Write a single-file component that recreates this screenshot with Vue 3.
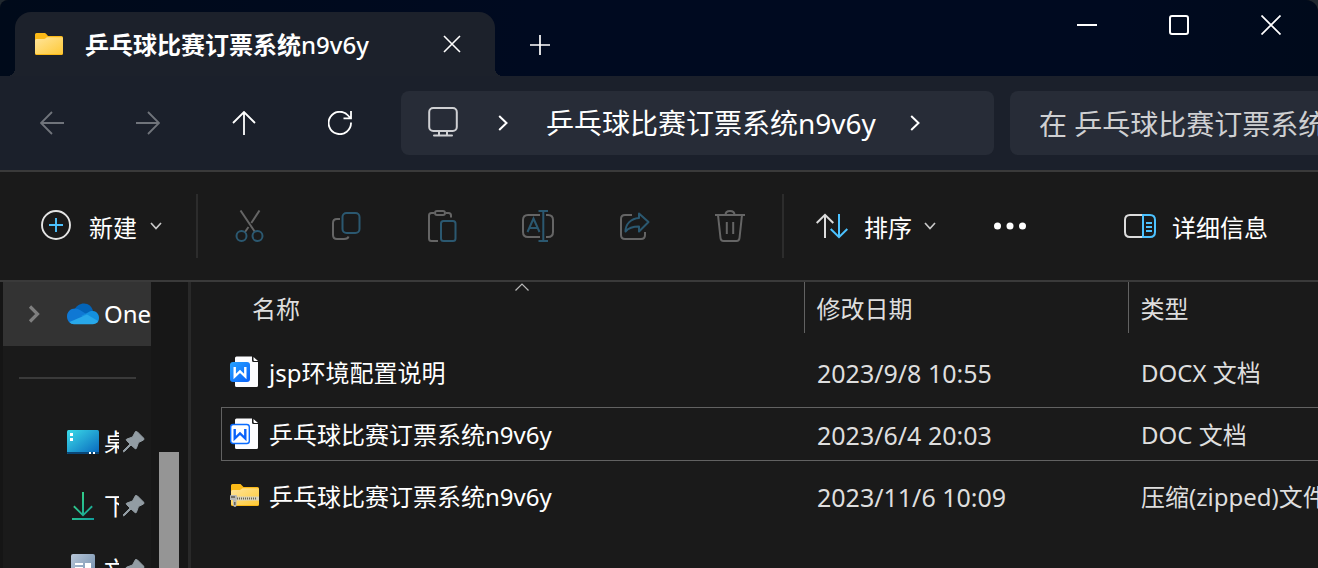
<script setup>
import { ref } from 'vue'

const folder = '乒乓球比赛订票系统'
const suffix = 'n9v6y'
const query = ref('')

const files = [
  { name: 'jsp环境配置说明', date: '2023/9/8 10:55', type: 'DOCX 文档', icon: 'docx', focused: false },
  { name: '乒乓球比赛订票系统n9v6y', date: '2023/6/4 20:03', type: 'DOC 文档', icon: 'doc', focused: true },
  { name: '乒乓球比赛订票系统n9v6y', date: '2023/11/6 10:09', type: '压缩(zipped)文件夹', icon: 'zip', focused: false }
]

const pinned = [
  { label: '桌面', icon: 'desktop' },
  { label: '下载', icon: 'download' },
  { label: '文档', icon: 'documents' }
]
</script>

<template>
  <div class="window">
    <header class="titlebar">
      <div class="tab">
        <svg class="tab-icon" width="28" height="22" viewBox="0 0 28 22">
          <defs>
            <linearGradient id="folderFront" x1="0" y1="0" x2="1" y2="1">
              <stop offset="0" stop-color="#ffe59b" />
              <stop offset="1" stop-color="#fec937" />
            </linearGradient>
          </defs>
          <path d="M0 1.500Q0 0 1.500 0H9.500Q10.500 0 11.300 1L13 3H26.500Q28 3 28 4.500V20.500Q28 22 26.500 22H1.500Q0 22 0 20.500Z" fill="#fbb917" />
          <path d="M0 7.500Q0 6 1.500 6H9Q10 6 11 5L12 4.200H26.500Q28 4.200 28 5.500V19.500Q28 21 26.500 21H1.500Q0 21 0 19.500Z" fill="url(#folderFront)" />
        </svg>
        <span class="tab-title">{{ folder }}<span class="latin">{{ suffix }}</span></span>
        <button class="tab-close" aria-label="关闭标签页">
          <svg width="18" height="18" viewBox="0 0 18 18"><path d="M1 1L17 17M17 1L1 17" stroke="#fff" stroke-width="1.6" /></svg>
        </button>
      </div>
      <button class="new-tab" aria-label="新标签页">
        <svg width="20" height="20" viewBox="0 0 20 20"><path d="M10 0V20M0 10H20" stroke="#fff" stroke-width="1.7" /></svg>
      </button>
      <div class="caption">
        <button aria-label="最小化"><svg width="20" height="20" viewBox="0 0 20 20"><path d="M0 10H20" stroke="#fff" stroke-width="2" /></svg></button>
        <button aria-label="最大化"><svg width="20" height="20" viewBox="0 0 20 20"><rect x="1" y="1" width="18" height="18" rx="2" fill="none" stroke="#fff" stroke-width="2" /></svg></button>
        <button aria-label="关闭"><svg width="20" height="20" viewBox="0 0 20 20"><path d="M.5 .5L19.500 19.500M19.500 .5L.5 19.500" stroke="#fff" stroke-width="1.7" /></svg></button>
      </div>
    </header>

    <nav class="navbar">
      <div class="nav-buttons">
        <button aria-label="后退" disabled>
          <svg width="24" height="24" viewBox="0 0 24 24"><path d="M24 12H1M12 1L1 12L12 23" /></svg>
        </button>
        <button aria-label="前进" disabled>
          <svg width="24" height="24" viewBox="0 0 24 24"><path d="M0 12H23M12 1L23 12L12 23" /></svg>
        </button>
        <button aria-label="向上">
          <svg width="24" height="24" viewBox="0 0 24 24"><path d="M12 24V1M1 12L12 1L23 12" /></svg>
        </button>
        <button aria-label="刷新">
          <svg width="24" height="24" viewBox="0 0 24 24"><path d="M23 11.500A11.200 11.200 0 1 1 20.600 5L22.500 7.300M23 0V7.400H15.500" /></svg>
        </button>
      </div>
      <div class="address">
        <svg class="monitor" width="32" height="32" viewBox="0 0 32 32" fill="none" stroke="#cfd0d3" stroke-width="2">
          <rect x="2.200" y="1" width="27.600" height="23" rx="4" />
          <path d="M12 24V28M20 24V28M7 28.500H25" stroke-linecap="round" />
        </svg>
        <svg class="crumb-chevron" width="10" height="16" viewBox="0 0 10 16"><path d="M1.200 1L8.500 8L1.200 15" /></svg>
        <button class="crumb">{{ folder }}{{ suffix }}</button>
        <svg class="crumb-chevron" width="10" height="16" viewBox="0 0 10 16"><path d="M1.200 1L8.500 8L1.200 15" /></svg>
      </div>
      <input v-model="query" class="search" type="text" aria-label="搜索" :placeholder="`在 ${folder}${suffix} 中搜索`" />
    </nav>

    <div class="commands">
      <button class="command create">
        <svg width="32" height="32" viewBox="0 0 32 32" fill="none">
          <circle cx="16" cy="15" r="14" stroke="#e4e4e4" stroke-width="1.900" />
          <path d="M16 8V22M9 15H23" stroke="#4cc2ff" stroke-width="1.900" />
        </svg>
        <span>新建</span>
        <svg class="drop" width="12" height="8" viewBox="0 0 12 8"><path d="M1 1L6 6.500L11 1" /></svg>
      </button>
      <span class="separator"></span>
      <div class="icon-group">
        <button aria-label="剪切" disabled>
          <svg width="32" height="32" viewBox="0 0 32 32">
            <path class="g" d="M6.500 .5L21 22M25.500 .5L17.300 13M14.500 17L11 22" />
            <circle class="b" cx="7.500" cy="26" r="5" /><circle class="b" cx="23.500" cy="26" r="5" />
          </svg>
        </button>
        <button aria-label="复制" disabled>
          <svg width="32" height="32" viewBox="0 0 32 32">
            <path class="g" d="M10 9H7Q3 9 3 13V25Q3 29 7 29H14Q18 29 18.500 26.500" />
            <rect class="b" x="12.500" y="3" width="17" height="20" rx="4" />
          </svg>
        </button>
        <button aria-label="粘贴" disabled>
          <svg width="32" height="32" viewBox="0 0 32 32">
            <path class="g" d="M8 3H5.500Q3 3 3 5.500V28.500Q3 31 5.500 31H12M20 3H22.500Q25 3 25 5.500V7.500" />
            <rect class="g" x="9" y="1" width="10" height="4" rx="2" />
            <rect class="b" x="15" y="11" width="14.500" height="20" rx="2.500" />
          </svg>
        </button>
        <button aria-label="重命名" disabled>
          <svg width="32" height="32" viewBox="0 0 32 32">
            <path class="g" d="M18 5H6Q1 5 1 10V22Q1 27 6 27H18M24 5H26Q31 5 31 10V22Q31 27 26 27H24" />
            <path class="b" d="M5.500 22L11.500 8.500L17.500 22M7.800 18H15.200M16.500 1H26M21.300 1V31M16.500 31H26" />
          </svg>
        </button>
        <button aria-label="共享" disabled>
          <svg width="32" height="32" viewBox="0 0 32 32">
            <path class="g" d="M14 5H7Q3 5 3 9V25Q3 29 7 29H23Q27 29 27 25V22" />
            <path class="b" d="M21 3.500L30.500 12L21 21.500V16.500C14 16.500 10 18.500 7.500 21.500C7.500 14 13 8.500 21 8Z" stroke-linejoin="round" />
          </svg>
        </button>
        <button aria-label="删除" disabled>
          <svg width="32" height="32" viewBox="0 0 32 32">
            <path class="g" d="M1 5H31M11.500 5Q11.500 1 16 1T20.500 5M4 5L6.500 28Q6.800 31 9.500 31H22.500Q25.200 31 25.500 28L28 5M12.800 12V24M19.200 12V24" />
          </svg>
        </button>
      </div>
      <span class="separator"></span>
      <button class="command sort">
        <svg width="32" height="32" viewBox="0 0 32 32" fill="none" stroke-width="2">
          <path d="M9 28V5M.7 13L9 4.800L17.300 13" stroke="#dcdcdc" />
          <path d="M23 4V27M14.700 19L23 27.200L31.300 19" stroke="#4cc2ff" />
        </svg>
        <span>排序</span>
        <svg class="drop" width="12" height="8" viewBox="0 0 12 8"><path d="M1 1L6 6.500L11 1" /></svg>
      </button>
      <button class="more" aria-label="更多">
        <svg width="32" height="8" viewBox="0 0 32 8" fill="#fff"><circle cx="3.500" cy="4" r="3.500" /><circle cx="16" cy="4" r="3.500" /><circle cx="28.500" cy="4" r="3.500" /></svg>
      </button>
      <button class="command details">
        <svg width="32" height="32" viewBox="0 0 32 32" fill="none" stroke-width="2">
          <path d="M18.500 5H6Q1 5 1 10V22Q1 27 6 27H18.500" stroke="#dcdcdc" />
          <path d="M19 5H26Q31 5 31 10V22Q31 27 26 27H19ZM22 13H28M22 17H28M22 21H28" stroke="#4cc2ff" />
        </svg>
        <span>详细信息</span>
      </button>
    </div>

    <div class="body">
      <aside class="sidebar">
        <div class="tree">
          <button class="node selected">
            <svg class="expander" width="12" height="18" viewBox="0 0 12 18"><path d="M2 1.500L9.500 9L2 16.500" fill="none" stroke="#7f7f7f" stroke-width="3.200" /></svg>
            <svg class="node-icon" width="32" height="22" viewBox="0 0 32 22">
              <path d="M7 8C9 2.500 13 .5 17 .5C21.500 .5 25 3.500 26 8L16 13Z" fill="#0364b8" />
              <path d="M7 21C3 21 0 18 0 13.500C0 9 3.500 5.500 8 5.500C11 5.500 12 6.500 14.500 8L21 12L8 21Z" fill="#0f78d4" />
              <path d="M14 13L21 9.500C23 8 24.500 7.800 26 8C30 8.500 32 11.500 32 15C32 17 31 19 30 20Z" fill="#1490df" />
              <path d="M2.500 19L20 11.500L31 18C30 20.300 28 21.300 25.500 21.300H7C5 21.300 3.500 20.300 2.500 19Z" fill="#28a8ea" />
            </svg>
            <span class="node-label">OneDrive</span>
          </button>
          <div class="tree-divider"></div>
          <button v-for="item in pinned" :key="item.icon" class="node">
            <span class="expander"></span>
            <svg v-if="item.icon === 'desktop'" class="node-icon" width="32" height="24" viewBox="0 0 32 24">
              <defs><linearGradient id="desk" x1="0" y1="0" x2="1" y2="1"><stop offset="0" stop-color="#3bdbe8" /><stop offset="1" stop-color="#0866bd" /></linearGradient></defs>
              <rect width="32" height="24" rx="1.500" fill="url(#desk)" />
              <path d="M0 22H32V22.500Q32 24 30.500 24H1.500Q0 24 0 22.500Z" fill="#0a4778" />
              <path d="M3 3h3v3h-3zM3 8h3v3h-3zM22 22h2v2h-2zM26 22h2v2h-2z" fill="#fff" />
            </svg>
            <svg v-else-if="item.icon === 'download'" class="node-icon" width="32" height="28" viewBox="0 0 32 28">
              <defs><linearGradient id="down" x1="0" y1="0" x2="1" y2="1"><stop offset="0" stop-color="#3ddc84" /><stop offset="1" stop-color="#109c9c" /></linearGradient></defs>
              <path d="M15 0h2v21l7.500-7.500l1.300 1.400L16 24.500L6.200 14.900L7.500 13.500L15 21zM5 26h22v2H5z" fill="url(#down)" />
            </svg>
            <svg v-else class="node-icon" width="32" height="32" viewBox="0 0 32 32">
              <defs><linearGradient id="docs" x1="0" y1="0" x2="1" y2="1"><stop offset="0" stop-color="#b7c6d8" /><stop offset="1" stop-color="#6785a5" /></linearGradient></defs>
              <rect x="4" width="24" height="32" rx="2" fill="url(#docs)" />
              <path d="M8 9h8v2H8zM8 13h8v2H8zM18 9h6v6h-6zM8 18h16v2H8z" fill="#fff" />
            </svg>
            <span class="node-label short">{{ item.label }}</span>
            <svg class="pin" width="22" height="22" viewBox="0 0 22 22">
              <path d="M12.500 .5Q13.500 0 14.500 1L20.500 7Q21.500 8 20.500 9L15.500 11.500L13.500 17Q13 18.500 12 17.500L8 14L1.500 20.500L.5 21L0 20L7 13L3.500 9.500Q2.500 8.500 4 8L9.500 6Z" fill="#929ca3" stroke="#929ca3" />
            </svg>
          </button>
        </div>
        <div class="scroll"><div class="thumb"></div></div>
      </aside>

      <main class="content">
        <table>
          <colgroup><col /><col class="col-date" /><col class="col-type" /></colgroup>
          <thead>
            <tr>
              <th scope="col" class="name-head" aria-sort="ascending">
                名称
                <svg class="sort-mark" width="14" height="8" viewBox="0 0 14 8"><path d="M.5 7.500L7 1L13.500 7.500" fill="none" stroke="#b8b8b8" stroke-width="1.200" /></svg>
              </th>
              <th scope="col">修改日期</th>
              <th scope="col">类型</th>
            </tr>
          </thead>
          <tbody>
            <tr v-for="file in files" :key="file.icon" :class="{ focused: file.focused }">
              <td>
                <div class="cell name">
                  <svg v-if="file.icon === 'zip'" width="29" height="24" viewBox="0 0 29 24">
                    <defs><linearGradient id="zipFront" x1="0" y1="0" x2="1" y2="1"><stop offset="0" stop-color="#ffe59b" /><stop offset="1" stop-color="#fec937" /></linearGradient></defs>
                    <path d="M1 1.500Q1 0 2.500 0H10.500L13.500 3H27.500Q29 3 29 4.500V20.500Q29 22 27.500 22H2.500Q1 22 1 20.500Z" fill="#fbb917" />
                    <path d="M1 7.500Q1 6 2.500 6H10L12.500 4.200H27.500Q29 4.200 29 5.500V19.500Q29 21 27.500 21H2.500Q1 21 1 19.500Z" fill="url(#zipFront)" />
                    <path d="M6 12.500H29V16.500H6Z" fill="#d8d3bd" />
                    <path d="M7 14.500H27" stroke="#6c664c" stroke-width="2" stroke-dasharray="1 1" />
                    <path d="M0 12Q0 11 1 11H6Q7 11 7 12V15H6.500V21Q6.500 23 5 23T3 21V16H0Z" fill="#b9b9b5" />
                    <path d="M1 13H5M4.800 18V21" stroke="#5b5a50" stroke-width="1.300" />
                  </svg>
                  <svg v-else width="29" height="32" viewBox="0 0 29 32">
                    <defs><linearGradient id="badge" x1="0" y1="0" x2="1" y2="1"><stop offset="0" stop-color="#25a2ff" /><stop offset="1" stop-color="#0a62fa" /></linearGradient></defs>
                    <path d="M5 2Q5 .5 6.500 .5H22V4.500Q22 6 23.500 6H28V29.500Q28 31 26.500 31H6.500Q5 31 5 29.500Z" fill="#fdfdff" />
                    <path d="M23.500 1L28 5H24.500Q23.500 5 23.500 4Z" fill="#fff" />
                    <rect v-if="file.icon === 'docx'" y="6" width="20" height="20" rx="3" fill="url(#badge)" />
                    <rect v-else x=".7" y="6.500" width="18.600" height="19" rx="2.500" fill="#fff" stroke="#0a6cff" stroke-width="1.400" />
                    <path d="M4.700 11V20.500L10 15.500L15.300 20.500V11" fill="none" :stroke="file.icon === 'docx' ? '#fff' : '#0a62fa'" stroke-width="2.400" />
                  </svg>
                  <span>{{ file.name }}</span>
                </div>
              </td>
              <td><div class="cell date"><span>{{ file.date }}</span></div></td>
              <td><div class="cell"><span>{{ file.type }}</span></div></td>
            </tr>
          </tbody>
        </table>
      </main>
    </div>
  </div>
</template>

<style>
html,
body {
  margin: 0;
  background: #20282f;
}
</style>

<style scoped>
.window {
  display: flex;
  flex-direction: column;
  height: 100vh;
  overflow: hidden;
  border-radius: 8px 12px 0 0;
  background: #1a1a1a;
  color: #fff;
  font-family: "Noto Sans", "Noto Sans CJK SC", sans-serif;
  font-size: 24px;
  line-height: 32px;
}
button {
  display: flex;
  align-items: center;
  justify-content: center;
  flex-shrink: 0;
  margin: 0;
  padding: 0;
  border: 0;
  background: none;
  color: inherit;
  font: inherit;
  white-space: nowrap;
}
svg {
  display: block;
  flex-shrink: 0;
}

.titlebar {
  display: flex;
  flex-shrink: 0;
  height: 76px;
  background: linear-gradient(90deg, #000a1a, #000a20 40%, #000a20 85%, #000a1b);
}
.tab {
  position: relative;
  display: flex;
  align-items: center;
  box-sizing: border-box;
  width: 480px;
  height: 64px;
  margin: 12px 0 0 15px;
  padding: 0 20px;
  border-radius: 16px 16px 0 0;
  background: #1c212b;
}
.tab::before,
.tab::after {
  content: "";
  position: absolute;
  bottom: 0;
  width: 8px;
  height: 8px;
}
.tab::before {
  right: 100%;
  background: radial-gradient(circle at 0 0, transparent 8px, #1c212b 8px);
}
.tab::after {
  left: 100%;
  background: radial-gradient(circle at 100% 0, transparent 8px, #1c212b 8px);
}
.tab-title {
  flex: 1;
  margin-left: 22px;
  padding-top: 2px;
  font-weight: 700;
  white-space: nowrap;
}
.latin {
  font-weight: 500;
}
.tab-close {
  width: 46px;
  height: 46px;
}
.new-tab {
  width: 90px;
  height: 90px;
}
.caption {
  display: flex;
  margin-left: auto;
  padding-right: 1px;
}
.caption button {
  width: 92px;
  height: 50px;
}

.navbar {
  display: flex;
  align-items: center;
  flex-shrink: 0;
  gap: 16px;
  height: 94px;
  padding-left: 4px;
  border-bottom: 2px solid #3a3a3a;
  background: #1b202b;
  font-size: 28px;
}
.nav-buttons {
  display: flex;
  margin-right: -3px;
}
.nav-buttons button {
  width: 96px;
  height: 64px;
}
.nav-buttons path {
  fill: none;
  stroke: #fff;
  stroke-width: 1.8;
}
.nav-buttons button:disabled path {
  stroke: #70747b;
}
.address {
  display: flex;
  align-items: center;
  flex: 1;
  box-sizing: border-box;
  min-width: 0;
  height: 64px;
  padding-left: 26px;
  border-radius: 8px;
  background: #272c37;
  overflow: hidden;
}
.crumb-chevron {
  margin: 0 38px 0 39px;
}
.crumb-chevron path {
  fill: none;
  stroke: #fff;
  stroke-width: 2;
}
.crumb + .crumb-chevron {
  margin-left: 34px;
}
.search {
  box-sizing: border-box;
  width: 308px;
  height: 64px;
  margin: 0;
  padding: 2px 0 0 29px;
  border: 0;
  border-radius: 8px 0 0 8px;
  outline: 0;
  background: #272c37;
  color: #fff;
  font: inherit;
}
.search::placeholder {
  color: #cfd0d2;
  opacity: 1;
}

.commands {
  display: flex;
  align-items: center;
  flex-shrink: 0;
  height: 108px;
  border-bottom: 2px solid #3a3a3a;
}
.command {
  gap: 16px;
  height: 64px;
}
.command span {
  padding-top: 3px;
}
.create {
  gap: 17px;
  padding: 0 34px 0 40px;
}
.drop {
  margin-left: -4px;
}
.drop path {
  fill: none;
  stroke: #c8c8c8;
  stroke-width: 1.7;
}
.separator {
  flex-shrink: 0;
  width: 2px;
  height: 64px;
  background: #2c2c2c;
}
.icon-group {
  display: flex;
  margin: 0 4px;
}
.icon-group button {
  width: 96px;
  height: 64px;
}
.g,
.b {
  fill: none;
  stroke: #656565;
  stroke-width: 2;
}
.b {
  stroke: #2b5870;
}
.sort {
  padding: 0 24px 0 32px;
}
.more {
  width: 100px;
  height: 64px;
}
.details {
  margin-left: auto;
  padding: 0 50px 0 20px;
}

.body {
  display: flex;
  flex: 1;
  min-height: 0;
}
.sidebar {
  display: flex;
  flex-shrink: 0;
  box-sizing: border-box;
  width: 191px;
  border-left: 3px solid #151515;
  border-right: 3px solid #292929;
}
.tree {
  width: 148px;
}
.node {
  justify-content: flex-start;
  width: 100%;
  height: 64px;
  overflow: hidden;
}
.selected {
  background: #333;
}
.expander {
  width: 12px;
  margin: 0 27px 0 25px;
}
.node-label {
  margin-left: 5px;
}
.short {
  width: 15px;
  margin-right: 4px;
  overflow: hidden;
  text-align: left;
}
.tree-divider {
  height: 2px;
  margin: 31px 15px 31px 16px;
  background: #3a3a3a;
}
.scroll {
  flex: 1;
  padding: 170px 9px 0 8px;
  background: #171717;
}
.thumb {
  height: 100%;
  background: #959595;
}

.content {
  flex: 1;
  min-width: 0;
  padding-left: 30px;
  overflow: hidden;
}
table {
  width: 100%;
  border-collapse: collapse;
  table-layout: fixed;
}
.col-date {
  width: 324px;
}
.col-type {
  width: 190px;
}
th {
  position: relative;
  height: 49px;
  padding: 2px 0 0 12px;
  border-left: 1px solid #626262;
  color: #dedede;
  font-weight: 400;
  text-align: left;
}
th.name-head {
  padding-left: 31px;
  border-left: 0;
}
.sort-mark {
  position: absolute;
  top: 1px;
  left: 50%;
  margin-left: 3px;
}
tbody::before {
  content: "";
  display: block;
  height: 8px;
}
td {
  padding: 4px 0;
}
.cell {
  display: flex;
  align-items: center;
  box-sizing: border-box;
  height: 54px;
  padding-left: 13px;
  border: 1px solid transparent;
  border-width: 1px 0;
  color: #dedede;
  white-space: nowrap;
  overflow: hidden;
}
.cell span {
  padding-top: 2px;
}
.date {
  font-size: 25px;
}
.name {
  gap: 10px;
  padding-left: 8px;
  border-left-width: 1px;
  color: #fff;
}
.focused .cell {
  border-color: #626262;
}
</style>
